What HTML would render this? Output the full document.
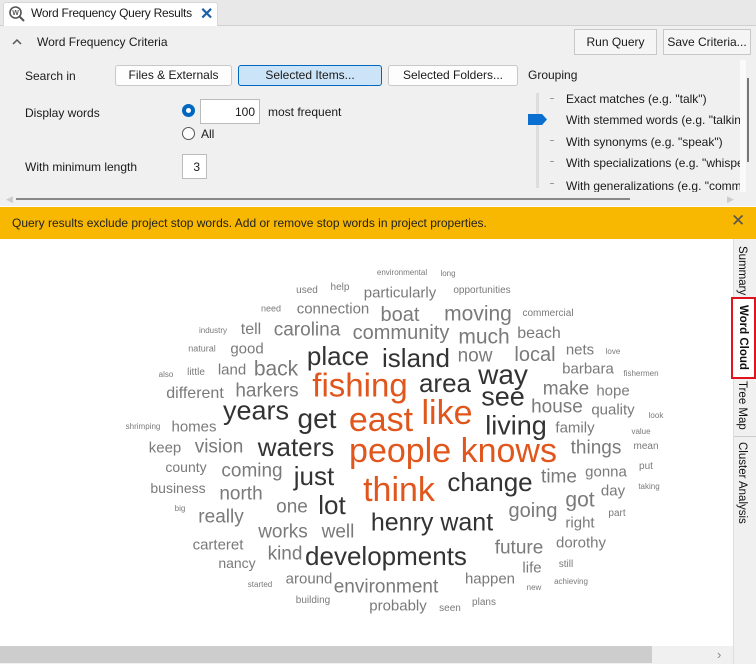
<!DOCTYPE html>
<html><head><meta charset="utf-8"><style>
*{box-sizing:border-box;margin:0;padding:0}
body{width:756px;height:664px;overflow:hidden;position:relative;background:#fff;font-family:"Liberation Sans",sans-serif;font-size:12px;color:#1a1a1a}
.a{position:absolute;white-space:nowrap}
.btn{position:absolute;background:#fdfdfd;border:1px solid #c8c8c8;border-radius:3px;text-align:center;font-size:12px;line-height:19px}
.w{position:absolute;white-space:nowrap;transform:translate(-50%,-50%);line-height:1;color:#7a7a7a;font-size:0.97em}
.d{color:#333}.o{color:#e0561c}
.vt{position:absolute;writing-mode:vertical-rl;font-size:11.5px;color:#111}
</style></head><body>
<div class="a" style="left:0;top:0;width:756px;height:26px;background:#e8e8e8;border-bottom:1px solid #d0d0d0"></div>
<div class="a" style="left:3px;top:2px;width:215px;height:24px;background:#fff;border:1px solid #d8d8d8;border-bottom:none;border-radius:3px 3px 0 0"></div>
<svg class="a" style="left:8px;top:5px" width="18" height="18" viewBox="0 0 18 18"><circle cx="7.5" cy="7.5" r="5.5" fill="none" stroke="#555" stroke-width="1.6"/><line x1="11.5" y1="11.5" x2="16" y2="16" stroke="#555" stroke-width="2"/><text x="7.5" y="10" font-size="7" text-anchor="middle" fill="#555" font-family="Liberation Sans" font-weight="bold">W</text></svg>
<div class="a" style="left:31px;top:6px;font-size:12px;letter-spacing:-0.25px">Word Frequency Query Results</div>
<div class="a" style="left:200px;top:4px;font-size:16px;color:#1a5fa8;font-weight:bold">✕</div>
<div class="a" style="left:0;top:26px;width:756px;height:167px;background:#f0f0f0"></div>
<svg class="a" style="left:12px;top:38px" width="10" height="8"><path d="M1 6 L5 2 L9 6" fill="none" stroke="#555" stroke-width="1.5"/></svg>
<div class="a" style="left:37px;top:35px;font-size:12px">Word Frequency Criteria</div>
<div class="btn" style="left:574px;top:29px;width:83px;height:26px;line-height:24px;background:#f5f5f5;border-radius:0">Run Query</div>
<div class="btn" style="left:663px;top:29px;width:88px;height:26px;line-height:24px;background:#f5f5f5;border-radius:0">Save Criteria...</div>
<div class="a" style="left:25px;top:69px">Search in</div>
<div class="btn" style="left:115px;top:65px;width:117px;height:21px">Files &amp; Externals</div>
<div class="btn" style="left:238px;top:65px;width:144px;height:21px;background:#cce4f7;border-color:#0067c0">Selected Items...</div>
<div class="btn" style="left:388px;top:65px;width:130px;height:21px">Selected Folders...</div>
<div class="a" style="left:528px;top:68px">Grouping</div>
<div class="a" style="left:25px;top:106px">Display words</div>
<div class="a" style="left:182px;top:104px;width:13px;height:13px;border-radius:50%;border:4px solid #0067c0;background:#fff"></div>
<div class="a" style="left:200px;top:99px;width:60px;height:25px;background:#fff;border:1px solid #bbb;text-align:right;padding:5px 4px 0 0">100</div>
<div class="a" style="left:268px;top:105px">most frequent</div>
<div class="a" style="left:182px;top:127px;width:13px;height:13px;border-radius:50%;border:1px solid #555;background:#fff"></div>
<div class="a" style="left:201px;top:127px">All</div>
<div class="a" style="left:25px;top:160px">With minimum length</div>
<div class="a" style="left:182px;top:154px;width:25px;height:25px;background:#fff;border:1px solid #bbb;text-align:right;padding:5px 6px 0 0">3</div>
<div class="a" style="left:536px;top:93px;width:3px;height:95px;background:#ddd"></div>
<div class="a" style="left:550px;top:98px;width:4px;height:1px;background:#999"></div>
<div class="a" style="left:550px;top:140px;width:4px;height:1px;background:#999"></div>
<div class="a" style="left:550px;top:161px;width:4px;height:1px;background:#999"></div>
<div class="a" style="left:550px;top:183px;width:4px;height:1px;background:#999"></div>
<svg class="a" style="left:528px;top:114px" width="20" height="11"><path d="M0 0 H14 L19 5.5 L14 11 H0Z" fill="#0a6fd0"/></svg>
<div class="a" style="left:566px;top:92px">Exact matches (e.g. "talk")</div>
<div class="a" style="left:566px;top:113px;width:174px;overflow:hidden">With stemmed words (e.g. "talking")</div>
<div class="a" style="left:566px;top:135px">With synonyms (e.g. "speak")</div>
<div class="a" style="left:566px;top:156px;width:174px;overflow:hidden">With specializations (e.g. "whisper")</div>
<div class="a" style="left:566px;top:179px;width:174px;height:13px;overflow:hidden">With generalizations (e.g. "communicate")</div>
<div class="a" style="left:740px;top:60px;width:6px;height:132px;background:#fafafa"></div>
<div class="a" style="left:747px;top:78px;width:2px;height:84px;background:#777"></div>
<div class="a" style="left:0;top:192px;width:756px;height:14px;background:#f0f0f0"></div>
<div class="a" style="left:16px;top:198px;width:614px;height:2px;background:#888"></div>
<div class="a" style="left:6px;top:194px;font-size:9px;color:#ccc">◀</div>
<div class="a" style="left:727px;top:194px;font-size:9px;color:#ccc">▶</div>
<div class="a" style="left:0;top:207px;width:756px;height:32px;background:#f8b700"></div>
<div class="a" style="left:12px;top:216px;font-size:12px;color:#222">Query results exclude project stop words. Add or remove stop words in project properties.</div>
<div class="a" style="left:731px;top:211px;font-size:17px;color:#555">✕</div>
<div class="a" style="left:733px;top:239px;width:23px;height:425px;background:#f0f0f0;border-left:1px solid #ddd"></div>
<div class="vt" style="left:736px;top:246px">Summary</div>
<div class="a" style="left:731px;top:297px;width:25px;height:82px;background:#fff;border:2px solid #e0141e"></div>
<div class="vt" style="left:737px;top:305px;font-weight:bold">Word Cloud</div>
<div class="vt" style="left:736px;top:381px">Tree Map</div>
<div class="a" style="left:734px;top:436px;width:22px;height:1px;background:#ccc"></div>
<div class="vt" style="left:736px;top:442px">Cluster Analysis</div>
<div class="a" style="left:0;top:646px;width:733px;height:18px;background:#f0f0f0"></div>
<div class="a" style="left:0;top:646px;width:652px;height:17px;background:#cdcdcd"></div>
<div class="a" style="left:717px;top:647px;font-size:13px;color:#888">›</div>
<div class="w" style="left:402px;top:273px;font-size:8px">environmental</div>
<div class="w" style="left:448px;top:274px;font-size:8px">long</div>
<div class="w" style="left:307px;top:291px;font-size:10px">used</div>
<div class="w" style="left:340px;top:288px;font-size:10px">help</div>
<div class="w" style="left:400px;top:293px;font-size:15px">particularly</div>
<div class="w" style="left:482px;top:291px;font-size:10px">opportunities</div>
<div class="w" style="left:271px;top:309px;font-size:9px">need</div>
<div class="w" style="left:333px;top:309px;font-size:15px">connection</div>
<div class="w" style="left:400px;top:315px;font-size:20px">boat</div>
<div class="w" style="left:478px;top:314px;font-size:21px">moving</div>
<div class="w" style="left:548px;top:314px;font-size:10px">commercial</div>
<div class="w" style="left:213px;top:331px;font-size:8px">industry</div>
<div class="w" style="left:251px;top:330px;font-size:16px">tell</div>
<div class="w" style="left:307px;top:330px;font-size:19px">carolina</div>
<div class="w" style="left:401px;top:333px;font-size:20px">community</div>
<div class="w" style="left:484px;top:337px;font-size:21px">much</div>
<div class="w" style="left:539px;top:334px;font-size:16px">beach</div>
<div class="w" style="left:202px;top:349px;font-size:9px">natural</div>
<div class="w" style="left:247px;top:349px;font-size:15px">good</div>
<div class="w d" style="left:338px;top:356px;font-size:26px">place</div>
<div class="w d" style="left:416px;top:358px;font-size:26px">island</div>
<div class="w" style="left:475px;top:356px;font-size:19px">now</div>
<div class="w" style="left:535px;top:355px;font-size:20px">local</div>
<div class="w" style="left:580px;top:350px;font-size:15px">nets</div>
<div class="w" style="left:613px;top:352px;font-size:8px">love</div>
<div class="w" style="left:166px;top:375px;font-size:8px">also</div>
<div class="w" style="left:196px;top:373px;font-size:10px">little</div>
<div class="w" style="left:232px;top:370px;font-size:15px">land</div>
<div class="w" style="left:276px;top:369px;font-size:21px">back</div>
<div class="w o" style="left:360px;top:385px;font-size:33px">fishing</div>
<div class="w d" style="left:445px;top:383px;font-size:26px">area</div>
<div class="w d" style="left:503px;top:375px;font-size:28px">way</div>
<div class="w" style="left:588px;top:369px;font-size:15px">barbara</div>
<div class="w" style="left:641px;top:374px;font-size:8px">fishermen</div>
<div class="w" style="left:195px;top:394px;font-size:16px">different</div>
<div class="w" style="left:267px;top:391px;font-size:19px">harkers</div>
<div class="w" style="left:566px;top:389px;font-size:19px">make</div>
<div class="w" style="left:613px;top:391px;font-size:15px">hope</div>
<div class="w d" style="left:256px;top:411px;font-size:27px">years</div>
<div class="w d" style="left:503px;top:397px;font-size:27px">see</div>
<div class="w" style="left:613px;top:410px;font-size:15px">quality</div>
<div class="w" style="left:557px;top:407px;font-size:19px">house</div>
<div class="w o" style="left:381px;top:420px;font-size:34px">east</div>
<div class="w o" style="left:447px;top:413px;font-size:34px">like</div>
<div class="w d" style="left:317px;top:419px;font-size:28px">get</div>
<div class="w d" style="left:516px;top:426px;font-size:27px">living</div>
<div class="w" style="left:656px;top:416px;font-size:8px">look</div>
<div class="w" style="left:143px;top:427px;font-size:8px">shrimping</div>
<div class="w" style="left:194px;top:427px;font-size:15px">homes</div>
<div class="w" style="left:575px;top:428px;font-size:15px">family</div>
<div class="w" style="left:641px;top:432px;font-size:8px">value</div>
<div class="w" style="left:165px;top:448px;font-size:15px">keep</div>
<div class="w" style="left:219px;top:447px;font-size:19px">vision</div>
<div class="w d" style="left:296px;top:447px;font-size:26px">waters</div>
<div class="w o" style="left:453px;top:451px;font-size:34px">people knows</div>
<div class="w" style="left:596px;top:448px;font-size:19px">things</div>
<div class="w" style="left:646px;top:447px;font-size:10px">mean</div>
<div class="w" style="left:186px;top:467px;font-size:14px">county</div>
<div class="w" style="left:252px;top:471px;font-size:19px">coming</div>
<div class="w d" style="left:314px;top:476px;font-size:26px">just</div>
<div class="w" style="left:559px;top:477px;font-size:19px">time</div>
<div class="w" style="left:606px;top:472px;font-size:15px">gonna</div>
<div class="w" style="left:646px;top:467px;font-size:10px">put</div>
<div class="w" style="left:178px;top:488px;font-size:14px">business</div>
<div class="w" style="left:241px;top:494px;font-size:19px">north</div>
<div class="w d" style="left:490px;top:482px;font-size:26px">change</div>
<div class="w o" style="left:399px;top:490px;font-size:34px">think</div>
<div class="w" style="left:613px;top:491px;font-size:15px">day</div>
<div class="w" style="left:649px;top:487px;font-size:8px">taking</div>
<div class="w" style="left:180px;top:509px;font-size:8px">big</div>
<div class="w" style="left:292px;top:507px;font-size:19px">one</div>
<div class="w d" style="left:332px;top:505px;font-size:26px">lot</div>
<div class="w" style="left:580px;top:500px;font-size:21px">got</div>
<div class="w" style="left:221px;top:517px;font-size:19px">really</div>
<div class="w" style="left:533px;top:511px;font-size:20px">going</div>
<div class="w" style="left:617px;top:514px;font-size:10px">part</div>
<div class="w d" style="left:432px;top:523px;font-size:25px">henry want</div>
<div class="w" style="left:580px;top:523px;font-size:15px">right</div>
<div class="w" style="left:283px;top:532px;font-size:19px">works</div>
<div class="w" style="left:338px;top:532px;font-size:19px">well</div>
<div class="w" style="left:218px;top:545px;font-size:15px">carteret</div>
<div class="w" style="left:285px;top:554px;font-size:19px">kind</div>
<div class="w" style="left:519px;top:548px;font-size:19px">future</div>
<div class="w" style="left:581px;top:543px;font-size:15px">dorothy</div>
<div class="w d" style="left:386px;top:556px;font-size:26px">developments</div>
<div class="w" style="left:237px;top:563px;font-size:14px">nancy</div>
<div class="w" style="left:532px;top:568px;font-size:15px">life</div>
<div class="w" style="left:566px;top:565px;font-size:10px">still</div>
<div class="w" style="left:309px;top:579px;font-size:15px">around</div>
<div class="w" style="left:386px;top:587px;font-size:19px">environment</div>
<div class="w" style="left:490px;top:579px;font-size:15px">happen</div>
<div class="w" style="left:260px;top:585px;font-size:8px">started</div>
<div class="w" style="left:534px;top:588px;font-size:8px">new</div>
<div class="w" style="left:571px;top:582px;font-size:8px">achieving</div>
<div class="w" style="left:313px;top:601px;font-size:10px">building</div>
<div class="w" style="left:398px;top:606px;font-size:15px">probably</div>
<div class="w" style="left:484px;top:603px;font-size:10px">plans</div>
<div class="w" style="left:450px;top:609px;font-size:10px">seen</div>
</body></html>
